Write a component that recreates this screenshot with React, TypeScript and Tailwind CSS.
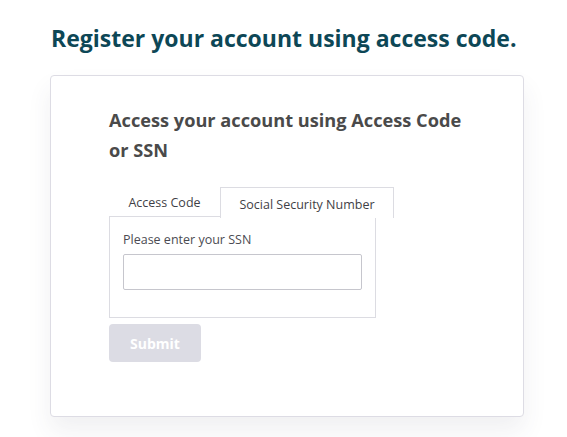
export default function App() {
  return (
    <div className="min-h-screen bg-white pt-[22px] font-['Open_Sans',sans-serif]">
      <h1 className="ml-[51px] text-[23px] font-bold leading-[32px] text-[#0d4756]">
        Register your account using access code.
      </h1>
      <div className="ml-[50px] mt-[21px] h-[342px] w-[474px] rounded-[4px] border border-[#dddce4] bg-white pl-[58px] pt-[29px] shadow-[0_14px_24px_rgba(60,60,90,0.08)]">
        <h2 className="w-[370px] text-[18.2px] font-bold leading-[30px] text-[#4a4a4a]">
          Access your account using Access Code or SSN
        </h2>
        <div className="mt-[22px] flex w-[285px] text-[12.5px] text-[#3f3f46]">
          <div className="flex h-[30px] w-[111px] items-center justify-center border-b border-[#dcdce2] pt-[4px]">
            Access Code
          </div>
          <div className="-mb-px flex h-[31px] w-[174px] items-center justify-center border border-b-0 border-[#dcdce2] bg-white pt-[4px]">
            Social Security Number
          </div>
        </div>
        <div className="w-[267px] border border-t-0 border-[#dcdce2] px-[13px] pb-[27px] pt-[14px]">
          <label className="block text-[12.5px] leading-[18px] text-[#4b4b52]">Please enter your SSN</label>
          <input className="mt-[5px] block h-[36px] w-[239px] rounded-[2px] border border-[#c6c6cd] bg-white px-2 outline-none" />
        </div>
        <button className="mt-[6px] h-[38px] w-[92px] rounded-[4px] bg-[#dcdce4] text-[14px] font-bold text-white">
          Submit
        </button>
      </div>
    </div>
  )
}
